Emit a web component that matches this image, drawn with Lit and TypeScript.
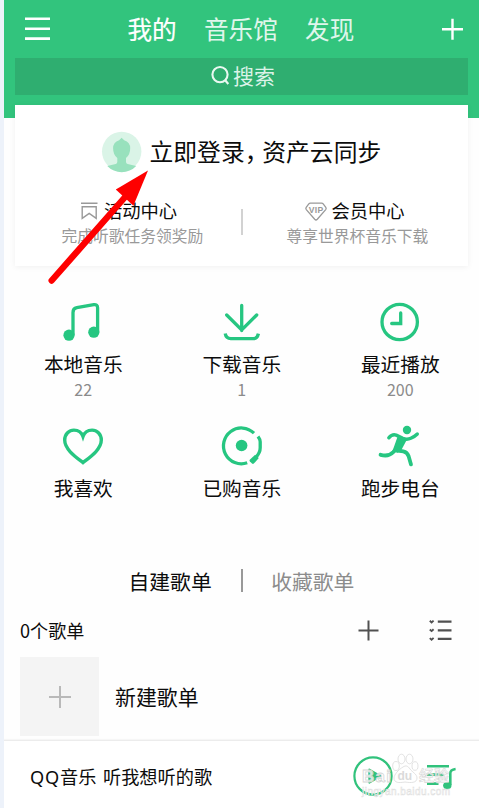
import { LitElement, html, svg, css, TemplateResult } from "lit";
import { customElement } from "lit/decorators.js";

interface Entry {
  label: string;
  count: string;
  icon: TemplateResult;
}

const note = svg`
  <path d="M12 37V14.400q0-4 3.800-4.700L32.800 6.600q3.800-.4 3.800 3.200V34" fill="none" stroke="currentColor" stroke-width="3.300"/>
  <circle cx="8" cy="37.200" r="5.600"/><circle cx="32.800" cy="34.200" r="5.600"/>`;
const download = svg`
  <g fill="none" stroke="currentColor" stroke-width="3.300" stroke-linecap="round" stroke-linejoin="miter">
  <path d="M21.700 7.500v25M6.700 17l15 15 15-15"/>
  <path d="M5.200 35.600q.8 5 5.600 5h22.400q4.200 0 5.200-5" stroke-linecap="butt"/></g>`;
const clock = svg`
  <g fill="none" stroke="currentColor" stroke-width="3.300">
  <circle cx="21.700" cy="24" r="17.700"/><path d="M22.700 14.900v10.600H13.700" stroke-linecap="round"/></g>`;
const heart = svg`
  <path d="M22 40.600C14.600 34.900 3.700 27.400 3.700 18.100 3.700 11.900 8.300 8.100 12.900 8.100c4 0 7.600 2 9.100 6.400 1.500-4.400 5.100-6.400 9.100-6.400 4.600 0 9.200 3.800 9.200 10 0 9.300-10.900 16.800-18.300 22.500z" fill="none" stroke="currentColor" stroke-width="3.400"/>`;
const disc = svg`
  <g fill="none" stroke="currentColor" stroke-width="3.300">
  <path d="M34 11.200A17.900 17.900 0 1 0 27.200 40.800"/>
  <path d="M38 14.600q2.200 3 2.200 5.200v6q0 5-4.200 9.200"/></g>
  <path d="M34.900 32.900l3.900 3.200-5 5.500q-.8.7-1.800 0l-2.100-2.200q-.8-.9.100-1.800z"/>
  <circle cx="21.600" cy="23.500" r="5.800"/>`;
const runner = svg`
  <circle cx="29" cy="8" r="4.200"/>
  <g fill="none" stroke="currentColor" stroke-linecap="round" stroke-linejoin="round">
  <path d="M10.800 15.800q3.400-4 7.400-2.700l6.600 3.200q4 1.800 8-.1 4.300-1.900 6.500-4.200" stroke-width="3.400"/>
  <path d="M2.600 32.800q8 2.300 12.800-2.800l4.400-5" stroke-width="3.900"/>
  <path d="M19.500 28.500l5.800.9q4 .8 5.400 5l2.300 8" stroke-width="3.800"/></g>
  <path d="M19.900 13.700l8.800 4.400-5.500 10.200-3.600 2.400-5.300-1.200z"/>`;

@customElement("music-tile")
class MusicTile extends LitElement {
  static properties = { entry: { attribute: false } };
  declare entry: Entry;
  static styles = css`
    :host { display: flex; flex-direction: column; align-items: center; }
    .icon { width: 44px; height: 48px; fill: currentColor; color: #26c681; display: block; }
    .label { font-size: 19.7px; line-height: 28px; margin-top: 3.5px; color: #0c0c0c; }
    .count { font-size: 16px; line-height: 20px; margin-top: 1px; color: #8b8b8b; }
  `;
  render() {
    return html`<svg class="icon" viewBox="0 0 44 48">${this.entry.icon}</svg>
      <div class="label">${this.entry.label}</div>
      <div class="count">${this.entry.count}</div>`;
  }
}

@customElement("app-root")
class AppRoot extends LitElement {
  static styles = css`
    * { box-sizing: border-box; }
    :host {
      display: flex; flex-direction: column; position: relative; box-sizing: border-box;
      width: 479px; height: 808px; overflow: hidden;
      border-left: 4px solid #edf2fa; background: #fefefe; color: #0c0c0c;
      font-family: "Noto Sans CJK SC", sans-serif; white-space: nowrap;
    }
    svg { display: block; flex: none; overflow: visible; }
    .header { flex: none; height: 118px; background: #32c47d; padding-right: 11px; color: #fff; }
    .bar { height: 58px; display: flex; align-items: center; padding: 0 5px 0 21px; }
    .tabs { display: flex; gap: 27.3px; margin: -3px 0 0 77.5px; font-size: 24.6px; line-height: 34px; }
    .tab { color: #e0f6ec; }
    .tab.on { color: #fff; -webkit-text-stroke: .2px #fff; }
    .add { margin-left: auto; }
    .search {
      height: 37px; margin-left: 11px; background: #2fae70; display: flex; align-items: center;
      gap: 4px; padding-left: 196px; font-size: 21px; line-height: 34px; color: #dcf3e8;
    }
    .search span { margin-top: -3px; }
    .search svg { margin-top: -2px; }
    .card {
      flex: none; width: 453px; height: 161px; margin: -13px 0 0 11px; background: #fff;
      box-shadow: 0 1px 6px rgba(0, 0, 0, .06); padding-top: 26px; position: relative;
    }
    .login { display: flex; align-items: center; height: 40px; padding-left: 87px; gap: 7.5px; font-size: 23.8px; line-height: 36px; }
    .login svg { margin-top: -1px; }
    .comma { font-feature-settings: "halt"; margin-right: 5.7px; }
    .centers { display: grid; grid-template-columns: 226px 1px 1fr; align-items: start; margin-top: 26px; }
    .rule { background: #d2d2d2; width: 1.5px; height: 26px; margin-top: 12px; }
    .center { display: flex; flex-direction: column; }
    .center.l { padding-left: 46.5px; }
    .center.r { padding-left: 44.5px; }
    .head { display: flex; align-items: center; height: 26px; font-size: 18.3px; line-height: 26px; }
    .head span { margin-top: -1px; }
    .l .head { padding-left: 19.5px; gap: 6px; }
    .r .head { padding-left: 18.5px; gap: 4.5px; }
    .head svg { margin-top: 2px; }
    .sub { font-size: 15.75px; line-height: 22px; margin-top: 2px; color: #999; }
    .vip { font: bold 8.6px "Liberation Sans", sans-serif; fill: #999; }
    .tiles { flex: none; display: grid; grid-template-columns: repeat(3, 158.5px); grid-auto-rows: 124px; height: 269px; margin-top: 32px; }
    .lists { flex: none; display: flex; align-items: center; height: 28px; padding-left: 124.5px; font-size: 20.8px; line-height: 28px; }
    .lists .split { width: 2px; height: 23px; background: #999; margin: -2px 28.5px 0 29px; }
    .off { color: #8c8c8c; }
    .tools { flex: none; display: flex; align-items: center; height: 28px; margin-top: 21px; padding: 0 27px 0 16px; font-size: 18.1px; }
    .tools .plus { margin-left: auto; margin-right: 50.5px; }
    .fresh { flex: none; display: flex; align-items: center; gap: 16px; padding-left: 16px; margin-top: 13px; height: 79px; font-size: 20.9px; line-height: 30px; }
    .fresh span { margin-top: -2px; }
    .cover { width: 79px; height: 79px; background: #f4f4f4; display: grid; place-items: center; }
    .player {
      flex: none; display: flex; align-items: center; margin-top: 4px; height: 68px;
      border-top: 1px solid #ececec; background: #fff; padding: 4px 23px 0 26px; font-size: 18.2px;
      box-shadow: 0 -1px 1px #f6f6f6;
    }
    .title { word-spacing: 2.5px; margin-top: -1px; }
    .qq { font-family: "Noto Sans", sans-serif; letter-spacing: .8px; }
    .play { margin-left: auto; margin-right: 33px; margin-top: -1px; }
    .arrow { position: absolute; left: 44px; top: 165px; }
    .mark { position: absolute; left: 355px; top: 750px; }
    .m1 { font: bold 17px "Liberation Sans", sans-serif; fill: rgba(255,255,255,.8); stroke: #d6d6d6; stroke-width: .8px; }
    .m4 { font: 500 15px "Noto Sans CJK SC", sans-serif; fill: rgba(255,255,255,.8); stroke: #d6d6d6; stroke-width: .6px; }
    .m2 { font: 10px "Liberation Sans", sans-serif; fill: rgba(255,255,255,.7); stroke: #dedede; stroke-width: .5px; }
    .m3 { font: bold 12px "Liberation Sans", sans-serif; fill: #dadada; }
  `;

  private entries: Entry[] = [
    { label: "本地音乐", count: "22", icon: note },
    { label: "下载音乐", count: "1", icon: download },
    { label: "最近播放", count: "200", icon: clock },
    { label: "我喜欢", count: "", icon: heart },
    { label: "已购音乐", count: "", icon: disc },
    { label: "跑步电台", count: "", icon: runner },
  ];

  render() {
    return html`
      <header class="header">
        <div class="bar">
          <svg width="25" height="24" viewBox="0 0 25 24" fill="#fff"><path d="M0 .5h25v2.600H0zM0 10.500h25v2.600H0zM0 20.300h25v2.600H0z"/></svg>
          <nav class="tabs"><span class="tab on">我的</span><span class="tab">音乐馆</span><span class="tab">发现</span></nav>
          <svg class="add" width="21" height="21" viewBox="0 0 21 21" fill="none" stroke="#fff" stroke-width="2.400"><path d="M0 10.200h21M10.500 -.3v21"/></svg>
        </div>
        <div class="search">
          <svg width="18" height="20" viewBox="0 0 18 20" fill="none" stroke="#eaf8f1" stroke-width="2.100"><circle cx="9" cy="8.600" r="7.600"/><path d="M14 14l3.300 4"/></svg>
          <span>搜索</span>
        </div>
      </header>
      <section class="card">
        <div class="login">
          <svg width="40" height="40" viewBox="0 0 40 40">
            <circle cx="19.700" cy="20.500" r="19.700" fill="#daf4e7"/>
            <path d="M19.600 6.700l2.600 2.600q6 2 6 8 0 6.400-4.200 9.800v4q0 1.600 1.600 2l8.600 1.800A19.700 19.700 0 0 1 5.300 34.900l8.400-1.800q1.600-.4 1.600-2v-4q-4.200-3.400-4.200-9.800 0-6 6-8z" fill="#98e1bd"/>
          </svg>
          <span>立即登录<span class="comma">，</span>资产云同步</span>
        </div>
        <div class="centers">
          <div class="center l">
            <div class="head">
              <svg width="17" height="18" viewBox="0 0 17 18" fill="none" stroke="#999" stroke-width="1.400"><path d="M0 1.200h16.500M1.200 4.800h14v11.600l-7-5-7 5z"/></svg>
              <span>活动中心</span>
            </div>
            <div class="sub">完成听歌任务领奖励</div>
          </div>
          <div class="rule"></div>
          <div class="center r">
            <div class="head">
              <svg width="22" height="19" viewBox="0 0 22 19" fill="none" stroke="#999" stroke-width="1.300"><path d="M5.400 1.200h11.200q1 0 1.600.7l2.600 3.400q.8 1.200-.1 2.300l-8.400 9.700q-1.300 1.300-2.600 0L1.300 7.600Q.4 6.500 1.200 5.300L3.800 1.900Q4.400 1.200 5.400 1.200z"/><text class="vip" x="3.800" y="10.800" stroke="none" textLength="14.400">VIP</text></svg>
              <span>会员中心</span>
            </div>
            <div class="sub">尊享世界杯音乐下载</div>
          </div>
        </div>
      </section>
      <section class="tiles">${this.entries.map((e) => html`<music-tile .entry=${e}></music-tile>`)}</section>
      <nav class="lists"><span>自建歌单</span><i class="split"></i><span class="off">收藏歌单</span></nav>
      <div class="tools">
        <span>0个歌单</span>
        <svg class="plus" width="21" height="21" viewBox="0 0 21 21" fill="none" stroke="#505050" stroke-width="2"><path d="M.5 10.500h20M10.500 .5v20"/></svg>
        <svg width="23" height="22" viewBox="0 0 23 22" fill="none" stroke="#505050"><path d="M8.800 2.600h13.700M8.800 11.300h13.700M8.800 19.900h13.700" stroke-width="2.200"/><path d="M.8 1.800l1.800 1.600L4.600 1.600M.8 10.500l1.800 1.600L4.600 10.300M.8 19.100l1.800 1.600L4.600 18.900" stroke-width="1.900"/></svg>
      </div>
      <div class="fresh">
        <div class="cover"><svg width="22" height="22" viewBox="0 0 22 22" fill="none" stroke="#b9b9b9" stroke-width="2"><path d="M0 11h22M11 0v22"/></svg></div>
        <span>新建歌单</span>
      </div>
      <footer class="player">
        <span class="title"><span class="qq">QQ</span>音乐 听我想听的歌</span>
        <svg class="play" width="40" height="40" viewBox="0 0 40 40" fill="none" stroke="#31c27c"><circle cx="20" cy="20" r="18.600" stroke-width="2.200"/><path d="M16.300 13.600l11.200 6.500-11.200 6.500z" fill="#31c27c" stroke-width="2" stroke-linejoin="round"/></svg>
        <svg width="30" height="26" viewBox="0 0 30 26" fill="none" stroke="#31c27c" stroke-width="2.600"><path d="M1 2.200h22M1 10.600h16.500M1 19.600h11.500"/><path d="M24.300 21V9.200q0-3.500 5.300-4.200"/><ellipse cx="21.300" cy="21.500" rx="4.200" ry="3.600" fill="#31c27c" stroke="none"/></svg>
      </footer>
      <svg class="arrow" width="110" height="125" viewBox="48 165 110 125">
        <path d="M51.700 280.500L126 196" stroke="#fe0000" stroke-width="6.400" stroke-linecap="round"/>
        <path d="M148 170.500L115.800 189.500 133.400 205.800z" fill="#fe0000"/>
      </svg>
      <svg class="mark" width="105" height="52" viewBox="359 750 105 52">
        <g fill="rgba(255,255,255,.65)" stroke="#dadada" stroke-width=".8">
          <ellipse cx="396" cy="766" rx="3.300" ry="4.500"/><ellipse cx="401.500" cy="759" rx="3.500" ry="4.800"/><ellipse cx="409.500" cy="759" rx="3.500" ry="4.800"/><ellipse cx="415" cy="766" rx="3" ry="4.300"/>
          <path d="M403 767c-5 3-9 8-9 11 0 5 5 5 11 4 6 1 12 1 12-4 0-4-5-6-7-9-2-3-4-4-7-2z"/>
        </g>
        <text class="m1" x="362" y="781.500" textLength="29">Bai</text><text class="m3" x="397.500" y="780">du</text><text class="m4" x="419" y="780.500" textLength="30">经验</text>
        <text class="m2" x="362" y="795" textLength="88">jingyan.baidu.com</text>
      </svg>`;
  }
}
